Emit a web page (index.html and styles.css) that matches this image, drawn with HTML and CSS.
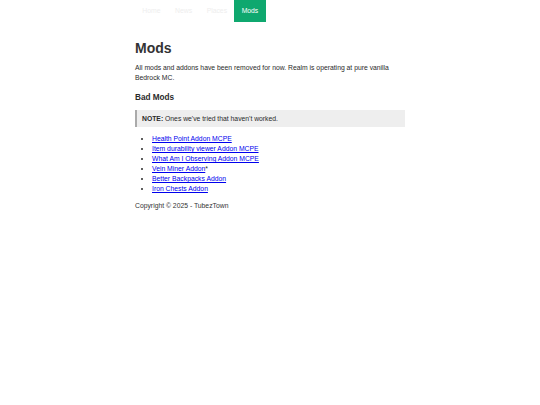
FILE: index.html
```html
<!DOCTYPE html>
<html lang="en">

<head>
    <meta charset="UTF-8">
    <title>Mods - TubezTown</title>
    <link rel="stylesheet" href="styles.css">
</head>

<body>
    <div class="page">
        <nav class="topnav">
            <a href="#">Home</a>
            <a href="#">News</a>
            <a href="#">Places</a>
            <a href="#" class="active">Mods</a>
        </nav>

        <h1>Mods</h1>
        <p>All mods and addons have been removed for now. Realm is operating at pure vanilla Bedrock MC.</p>

        <h3>Bad Mods</h3>
        <div class="note"><b>NOTE:</b> Ones we've tried that haven't worked.</div>

        <ul class="modlist">
            <li><a href="#">Health Point Addon MCPE</a></li>
            <li><a href="#">Item durability viewer Addon MCPE</a></li>
            <li><a href="#">What Am I Observing Addon MCPE</a></li>
            <li><a href="#">Vein Miner Addon</a>*</li>
            <li><a href="#">Better Backpacks Addon</a></li>
            <li><a href="#">Iron Chests Addon</a></li>
        </ul>

        <footer>Copyright &copy; 2025 - TubezTown</footer>
    </div>
</body>

</html>
```

FILE: styles.css
```css
* {
    padding: 0;
    margin: 0;
    box-sizing: border-box;
}

body {
    font-family: "Liberation Sans", Arial, sans-serif;
    font-size: 6.8px;
    line-height: 10px;
    color: #2a2a2a;
    background: #fff;
}

.page {
    width: 270px;
    margin: 0 auto;
}

.topnav {
    display: flex;
    height: 22px;
}

.topnav a {
    display: block;
    padding: 0 7.3px;
    line-height: 22px;
    color: #eee;
    text-decoration: none;
}

.topnav a.active {
    background-color: #0fa86f;
    color: #fff;
}

h1 {
    font-size: 14px;
    line-height: 16px;
    margin: 18px 0 7px;
    color: #333;
}

p {
    margin-bottom: 10px;
}

h3 {
    font-size: 8.2px;
    line-height: 10px;
    margin: 0 0 7px;
}

.note {
    background: #eee;
    border-left: 2px solid #aaa;
    padding: 4px 5px;
    line-height: 9px;
}

.modlist {
    margin: 7px 0 7px 17px;
}

.modlist a {
    color: #0000ee;
}

footer {
    color: #333;
}
```
